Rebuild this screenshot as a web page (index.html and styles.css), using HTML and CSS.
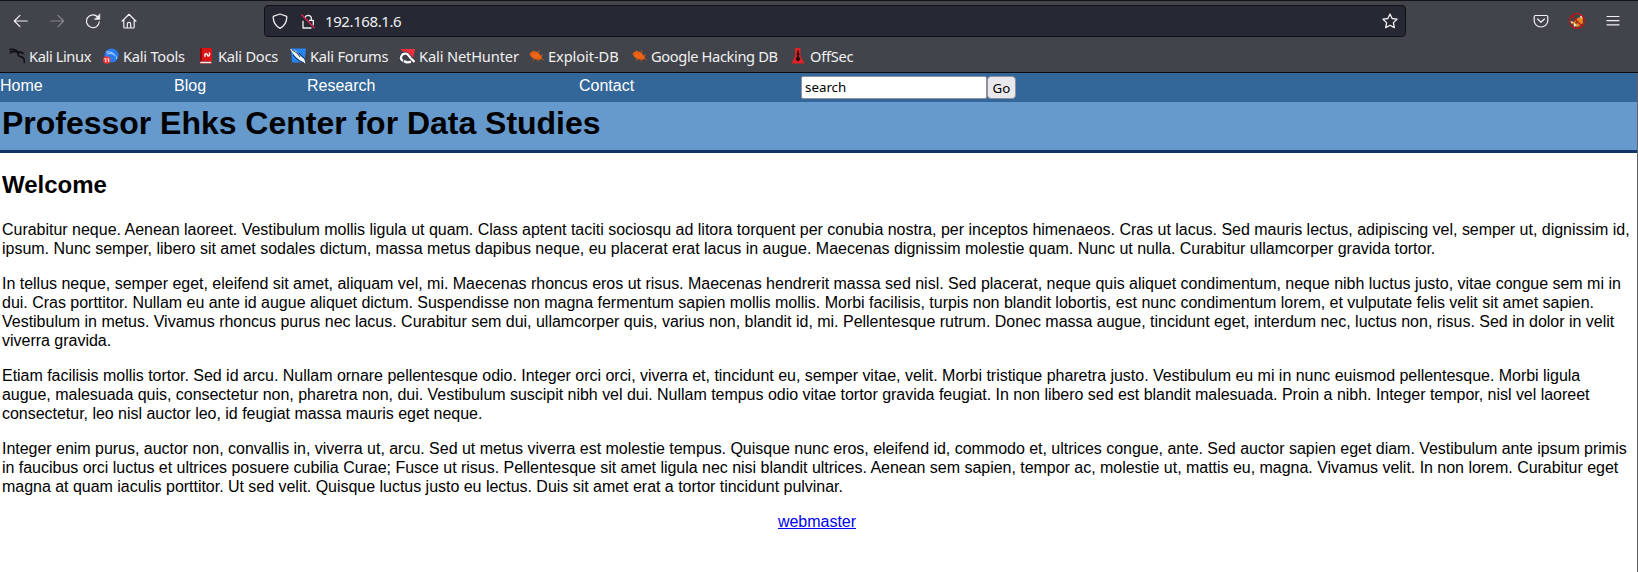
FILE: index.html
```html
<!DOCTYPE html>
<html lang="en">
<head>
<meta charset="utf-8">
<title>Professor Ehks Center for Data Studies</title>
<link rel="stylesheet" href="styles.css">
</head>
<body>
<div class="window">
  <header class="chrome">
    <div class="toolbar">
      <svg class="tool back" viewBox="0 0 16 16"><path d="M14.3 8H1.5M7 2.3 1.3 8 7 13.7"/></svg>
      <svg class="tool forward" viewBox="0 0 16 16"><path d="M1.7 8h12.8M9 2.3 14.7 8 9 13.7"/></svg>
      <svg class="tool reload" viewBox="0 0 16 16"><path d="M14.3 8.8A6.4 6.4 0 1 1 12.7 4"/><path class="solid" d="M14.9 1v5.4H9.5z"/></svg>
      <svg class="tool home" viewBox="0 0 16 16"><path d="M1 8.2 8 1.3l7 6.9M2.8 7v7a1 1 0 0 0 1 1h8.4a1 1 0 0 0 1-1V7M6.3 15v-4a1.7 1.7 0 0 1 3.4 0v4"/></svg>
      <div class="address">
        <svg class="icon" viewBox="0 0 16 16"><path d="M8 1 14.2 3.1a1 1 0 0 1 .6 1C14.8 9 12.5 13 8 15.3 3.5 13 1.2 9 1.2 4.1a1 1 0 0 1 .6-1z"/></svg>
        <svg class="icon lock" viewBox="0 0 16 16"><path d="M5 4.6a3.3 3.3 0 0 1 6.3 0V7.3M9 7.3h4.3v5M3 7.8V15h8.5"/><path class="slash" d="M1.5 1.5 14.5 15"/></svg>
        <span class="url">192.168.1.6</span>
        <svg class="icon star" viewBox="0 0 16 16"><path d="m8 1 2.1 4.5 4.9.7-3.6 3.4.9 5L8 12.3l-4.3 2.3.9-5L1 6.2l4.9-.7z"/></svg>
      </div>
      <svg class="tool pocket" viewBox="0 0 16 16"><path d="M2.4 2.5h11.2a1.2 1.2 0 0 1 1.2 1.2v4a6.8 6.3 0 0 1-13.6 0v-4a1.2 1.2 0 0 1 1.2-1.2zM4.6 6 8 9.3 11.4 6"/></svg>
      <svg class="tool fox" viewBox="0 0 16 16"><path fill="#e6861e" d="m2 8 3 .8 4-4 2-.5 2-2.5.8 3L14 10l-5 4-4-1z"/><path fill="#eee4d8" d="m1 8 3 1-1 2zM12 2l1 1v3l-2-2zM5 10l3 2-3 2z"/><path fill="#70452b" d="m6 9 2-1 1 2-2 1z"/><g fill="none" stroke="#c41414"><circle cx="8" cy="8" r="7.4"/><path d="m3 3 10 10"/></g></svg>
      <svg class="tool menu" viewBox="0 0 16 16"><path d="M2 3.5h12M2 7.7h12M2 11.8h12"/></svg>
    </div>
    <nav class="bookmarks">
      <a class="bm linux"><svg viewBox="0 0 16 16"><g fill="none" stroke="#101215"><path d="M0 1.4c4-.6 8 .5 10 3.4M.8 5.4c3-2.3 6-2.3 8.4-.3M1 3.2l7.5.6" stroke-width="1.4"/><path d="M14.4 5.4c-3.4-2-6.6-.4-5 2 1.2 1.7 5.2.7 5.8 4.3l.3 3.5" stroke-width="1.7"/><path d="M10 4c2.4-.8 4 .6 5.5 3"/></g></svg>Kali Linux</a>
      <a class="bm tools"><svg viewBox="0 0 16 16"><circle cx="8.5" cy="7.5" r="7" fill="#287bf0"/><path d="M3 4c4-.6 7 .2 8 2.8m-7-.6c3-1.3 5-.7 7 .6 2 1 3 2 2.4 4.2" fill="none" stroke="#b9d5fa"/><circle cx="3.8" cy="12" r="3.8" fill="#ef3838"/><path d="M1.4 10.8h1.4V14m1.5-3.2h1.4V14" fill="none" stroke="#fff"/></svg>Kali Tools</a>
      <a class="bm docs"><svg viewBox="0 0 16 16"><path d="M2 0h12v13H2z" fill="#d91414"/><path d="M2 0h2v14H2z" fill="#8f0808"/><path d="M2 13.5h11.5v2H2z" fill="#eee" stroke="#b01616" stroke-width=".5"/><path d="M11.5 4.5v2.3c0 1.6-2.2 1.6-2.2 0s-2.4-1.6-2.4 0v2" fill="none" stroke="#fff" stroke-width="1.4"/></svg>Kali Docs</a>
      <a class="bm forums"><svg viewBox="0 0 16 16"><path d="M1 .5h15l-1.5 14H2z" fill="#2685f5"/><path d="m0 1 6 2 3 4 5 4 1.5 4.5L10 12.500 5 8 2 4z" fill="#fff"/><path d="m2 2 5 3 3 4M3 7l5 5 6 3M9 5l6 6" fill="none" stroke="#202936" stroke-width=".9"/></svg>Kali Forums</a>
      <a class="bm hunter"><svg viewBox="0 0 16 16"><path d="M1 1h15l-2 10-6-4z" fill="#f22e3d"/><path d="M3 12.500C0 10 3 5 7 5.700c3 .5 3 3 5 4.800l3.500 3.500" fill="none" stroke="#34373d" stroke-width="4"/><path d="M4 13C0 11 2.500 5 7 5.700c3 .5 3 3 5 4.800l3.500 3.500M5 13c2 1.500 5 1.500 7 .5" fill="none" stroke="#fff" stroke-width="2.300"/></svg>Kali NetHunter</a>
      <a class="bm exploit"><svg viewBox="0 0 16 16"><path d="M2 5.500c2-3 6-3 9 0l3 3.500c0 2-2 3.500-5 2.500-4-.5-7-3-7-6z" fill="#f06414"/><path d="M1 6h4m0-4 3 4m3-4-1 4m5 1-4 1m5 4-4-2M5 13l2-3m3 4V9" fill="none" stroke="#c85718" stroke-width=".8"/></svg>Exploit-DB</a>
      <a class="bm google"><svg viewBox="0 0 16 16"><path d="M2 5.500c2-3 6-3 9 0l3 3.500c0 2-2 3.500-5 2.500-4-.5-7-3-7-6z" fill="#f06414"/><path d="M1 6h4m0-4 3 4m3-4-1 4m5 1-4 1m5 4-4-2M5 13l2-3m3 4V9" fill="none" stroke="#c85718" stroke-width=".8"/></svg>Google Hacking DB</a>
      <a class="bm offsec"><svg viewBox="0 0 16 16"><path d="M5 0h5.500v8l4 7.500H1.500l3.500-7.500z" fill="#df2227"/><path d="M8 2.500V13M6.500 6h3" stroke="#280b0b" stroke-width="1.500"/><path d="m8 7 2.500 4L8 13.500 5.500 11z" fill="#280b0b"/></svg>OffSec</a>
    </nav>
  </header>
  <main class="page">
    <nav class="sitenav">
      <a>Home</a><a>Blog</a><a>Research</a><a>Contact</a>
      <form class="search"><input class="field" type="text" value="search"><button class="go" type="button">Go</button></form>
    </nav>
    <div class="banner"><h1 class="title">Professor Ehks Center for Data Studies</h1></div>
    <article class="content">
      <h2 class="welcome">Welcome</h2>
      <p>Curabitur neque. Aenean laoreet. Vestibulum mollis ligula ut quam. Class aptent taciti sociosqu ad litora torquent per conubia nostra, per inceptos himenaeos. Cras ut lacus. Sed mauris lectus, adipiscing vel, semper ut, dignissim id,<br>ipsum. Nunc semper, libero sit amet sodales dictum, massa metus dapibus neque, eu placerat erat lacus in augue. Maecenas dignissim molestie quam. Nunc ut nulla. Curabitur ullamcorper gravida tortor.</p>
      <p>In tellus neque, semper eget, eleifend sit amet, aliquam vel, mi. Maecenas rhoncus eros ut risus. Maecenas hendrerit massa sed nisl. Sed placerat, neque quis aliquet condimentum, neque nibh luctus justo, vitae congue sem mi in<br>dui. Cras porttitor. Nullam eu ante id augue aliquet dictum. Suspendisse non magna fermentum sapien mollis mollis. Morbi facilisis, turpis non blandit lobortis, est nunc condimentum lorem, et vulputate felis velit sit amet sapien.<br>Vestibulum in metus. Vivamus rhoncus purus nec lacus. Curabitur sem dui, ullamcorper quis, varius non, blandit id, mi. Pellentesque rutrum. Donec massa augue, tincidunt eget, interdum nec, luctus non, risus. Sed in dolor in velit<br>viverra gravida.</p>
      <p class="tight">Etiam facilisis mollis tortor. Sed id arcu. Nullam ornare pellentesque odio. Integer orci orci, viverra et, tincidunt eu, semper vitae, velit. Morbi tristique pharetra justo. Vestibulum eu mi in nunc euismod pellentesque. Morbi ligula<br>augue, malesuada quis, consectetur non, pharetra non, dui. Vestibulum suscipit nibh vel dui. Nullam tempus odio vitae tortor gravida feugiat. In non libero sed est blandit malesuada. Proin a nibh. Integer tempor, nisl vel laoreet<br>consectetur, leo nisl auctor leo, id feugiat massa mauris eget neque.</p>
      <p class="tight">Integer enim purus, auctor non, convallis in, viverra ut, arcu. Sed ut metus viverra est molestie tempus. Quisque nunc eros, eleifend id, commodo et, ultrices congue, ante. Sed auctor sapien eget diam. Vestibulum ante ipsum primis<br>in faucibus orci luctus et ultrices posuere cubilia Curae; Fusce ut risus. Pellentesque sit amet ligula nec nisi blandit ultrices. Aenean sem sapien, tempor ac, molestie ut, mattis eu, magna. Vivamus velit. In non lorem. Curabitur eget<br>magna at quam iaculis porttitor. Ut sed velit. Quisque luctus justo eu lectus. Duis sit amet erat a tortor tincidunt pulvinar.</p>
      <p class="contact"><a href="#">webmaster</a></p>
    </article>
  </main>
</div>
</body>
</html>
```

FILE: styles.css
```css
* { box-sizing: border-box; }
body { margin: 0; background: #fff; overflow: hidden; }
.window { width: 1638px; height: 572px; }
.chrome { height: 73px; background: #42444b; border-top: 1px solid #131418; border-bottom: 1px solid #0c0c0d; font-family: "Noto Sans", sans-serif; color: #f0f0f1; }
.toolbar { height: 39px; display: flex; align-items: center; padding-left: 13px; }
.tool { width: 16px; height: 16px; flex: none; fill: none; stroke: #f0f0f2; stroke-width: 1.2; stroke-linecap: round; stroke-linejoin: round; }
.forward { margin-left: 20px; stroke: #85868a; }
.reload { margin-left: 20px; }
.solid { fill: #f0f0f2; stroke-width: .5; }
.home { margin-left: 20px; }
.address { width: 1142px; height: 32px; margin-left: 127px; display: flex; align-items: center; padding: 0 7px; background: #262833; border: 1px solid #101116; border-radius: 4px; }
.icon { width: 16px; height: 16px; fill: none; stroke: #f0f0f2; stroke-width: 1.3; stroke-linejoin: round; }
.lock { margin-left: 12px; }
.slash { stroke: #e22850; }
.url { margin-left: 9px; font-size: 15px; line-height: 20px; letter-spacing: -.4px; }
.star { margin-left: auto; }
.pocket { margin-left: 127px; }
.fox { margin-left: 20px; stroke: none; }
.menu { margin-left: 20px; }
.bookmarks { height: 32px; display: flex; align-items: center; padding-left: 9px; }
.bm { display: flex; align-items: center; gap: 4px; flex: none; font-size: 14.67px; line-height: 20px; letter-spacing: -.25px; white-space: nowrap; }
.bm svg { width: 16px; height: 16px; flex: none; }
.linux { width: 94px; letter-spacing: -.4px; }
.tools { width: 95px; }
.docs { width: 92px; }
.forums { width: 109px; }
.hunter { width: 129px; letter-spacing: -.15px; }
.exploit { width: 103px; letter-spacing: -.1px; }
.google { width: 159px; letter-spacing: -.38px; }
.page { height: 499px; border-right: 1px solid #606168; font-family: "Liberation Sans", Arial, sans-serif; font-size: 16px; line-height: 19px; color: #000; }
.sitenav { height: 29px; background: #336699; color: #fff; display: grid; grid-template-columns: 174px 133px 272px 222px 1fr; padding-top: 3px; }
.search { margin: 0; display: flex; }
.field { width: 186px; height: 23px; padding: 0 3px 1px; border: 1px solid #8f8f9d; border-radius: 2px; background: #fff; font: 13.33px "Noto Sans", sans-serif; color: #000; }
.go { width: 29px; height: 23px; padding: 0; border: 1px solid #8f8f9d; border-radius: 4px; background: #e9e9ed; font: 13.33px "Noto Sans", sans-serif; color: #000; }
.banner { height: 51px; padding: 2px 2px 0; background: #6699cc; border-bottom: 3px solid #113366; }
.title { margin: 0; font-size: 32px; line-height: 38px; letter-spacing: -.02px; }
.content { padding: 18px 2px 0; }
.welcome { margin: 0 0 21px; font-size: 24px; line-height: 28px; }
.content p { margin: 0 0 16px; white-space: nowrap; letter-spacing: -.015px; }
.content .tight { letter-spacing: -.024px; }
.content .contact { padding-right: 3px; text-align: center; }
.contact a { color: #0000ee; }
```
